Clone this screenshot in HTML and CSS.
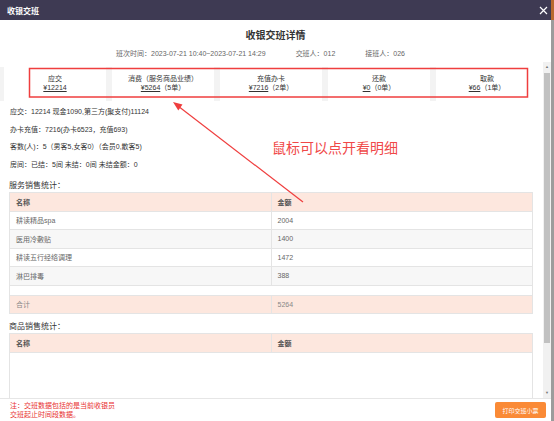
FILE: index.html
```html
<!DOCTYPE html>
<html lang="zh-CN">
<head>
    <meta charset="UTF-8">
    <title>收银交班</title>
    <link rel="stylesheet" href="styles.css">
</head>
<body>
    <div class="dialog">
        <div class="dlg-head">
            <span class="dlg-title">收银交班</span>
            <svg class="close" width="9" height="9" viewBox="0 0 9 9">
                <path d="M1 1 L8 8 M8 1 L1 8" stroke="#fff" stroke-width="1.2" fill="none"/>
            </svg>
        </div>

        <div class="dlg-body">
            <div class="top">
                <h1>收银交班详情</h1>
                <div class="meta">
                    <span>班次时间：2023-07-21 10:40~2023-07-21 14:29</span>
                    <span>交班人：012</span>
                    <span>接班人：026</span>
                </div>
            </div>

            <div class="scroll">
                <div class="content">
                    <div class="summary">
                        <div class="sum-cell">
                            <div>应交</div>
                            <div><u>¥12214</u></div>
                        </div>
                        <div class="sum-cell">
                            <div>消费（服务商品业绩）</div>
                            <div><u>¥5264</u>（5单）</div>
                        </div>
                        <div class="sum-cell">
                            <div>充值办卡</div>
                            <div><u>¥7216</u>（2单）</div>
                        </div>
                        <div class="sum-cell">
                            <div>还款</div>
                            <div><u>¥0</u>（0单）</div>
                        </div>
                        <div class="sum-cell">
                            <div>取款</div>
                            <div><u>¥66</u>（1单）</div>
                        </div>
                    </div>

                    <div class="info">
                        <p>应交：12214 现金1090,第三方(聚支付)11124</p>
                        <p>办卡充值：7216(办卡6523，充值693)</p>
                        <p>客数(人)：5（男客5,女客0）（会员0,散客5)</p>
                        <p>房间：已结：5间 未结：0间 未结金额：0</p>
                    </div>

                    <h3 class="sec-title">服务销售统计：</h3>
                    <table class="grid">
                        <thead>
                            <tr><th>名称</th><th>金额</th></tr>
                        </thead>
                        <tbody>
                            <tr><td>耕读精品spa</td><td>2004</td></tr>
                            <tr class="alt"><td>医用冷敷贴</td><td>1400</td></tr>
                            <tr><td>耕读五行经络调理</td><td>1472</td></tr>
                            <tr class="alt"><td>淋巴排毒</td><td>388</td></tr>
                            <tr class="blank"><td colspan="2"></td></tr>
                            <tr class="total"><td>合计</td><td>5264</td></tr>
                        </tbody>
                    </table>

                    <h3 class="sec-title">商品销售统计：</h3>
                    <table class="grid">
                        <thead>
                            <tr><th>名称</th><th>金额</th></tr>
                        </thead>
                        <tbody>
                            <tr class="empty"><td colspan="2"></td></tr>
                        </tbody>
                    </table>
                </div>

                <div class="scrollbar">
                    <div class="sb-arrow">▲</div>
                    <div class="sb-thumb"></div>
                    <div class="sb-space"></div>
                    <div class="sb-arrow">▼</div>
                </div>
            </div>
        </div>

        <div class="dlg-foot">
            <div class="note">注：交班数据包括的是当前收银员<br>交班起止时间段数据。</div>
            <button class="print-btn">打印交班小票</button>
        </div>

        <!-- 标注：红框 + 箭头 + 提示文字 -->
        <svg class="annot" width="551" height="421" viewBox="0 0 551 421">
            <rect x="29.5" y="68.5" width="498" height="28.5" fill="none" stroke="#ef3e3e" stroke-width="1.5"/>
            <line x1="303" y1="202" x2="178" y2="106" stroke="#ef3e3e" stroke-width="1.2"/>
            <polygon points="173,102 182.5,104.6 178.3,110.4" fill="#ef3e3e"/>
            <text x="272" y="153" class="annot-text">鼠标可以点开看明细</text>
        </svg>
    </div>
</body>
</html>
```

FILE: styles.css
```css
* {
    box-sizing: border-box;
}

body {
    margin: 0;
    width: 554px;
    height: 421px;
    overflow: hidden;
    background: linear-gradient(#b8692f 0, #b8692f 20px, #9c9c9c 20px);
    font-family: "Liberation Sans", "Noto Sans CJK SC", sans-serif;
}

.dialog {
    position: relative;
    width: 551px;
    height: 421px;
    background: #fff;
    display: flex;
    flex-direction: column;
}

.dlg-head {
    height: 20px;
    flex: none;
    background: #3e3a53;
    color: #fff;
    display: flex;
    align-items: center;
    justify-content: space-between;
    padding: 0 3px 0 7px;
}

.dlg-title {
    font-size: 8px;
    font-weight: bold;
}

.close {
    display: block;
}

.dlg-body {
    flex: 1;
    min-height: 0;
    display: flex;
    flex-direction: column;
}

.top {
    height: 42px;
    flex: none;
    padding-top: 8px;
}

.top h1 {
    margin: 0;
    text-align: center;
    font-size: 10px;
    line-height: 16px;
    color: #333;
}

.meta {
    margin-top: 5px;
    display: flex;
    justify-content: center;
    gap: 30px;
    padding-right: 30px;
    font-size: 7px;
    line-height: 10px;
    color: #666;
}

.scroll {
    flex: 1;
    min-height: 0;
    display: flex;
}

.content {
    flex: 1;
    overflow: hidden;
    padding-top: 5px;
}

/* 顶部汇总 */
.summary {
    margin-right: 5px;
    padding-left: 4px;
    display: grid;
    grid-template-columns: repeat(5, 1fr);
    gap: 6px;
    background: #f3f3f3;
}

.sum-cell {
    height: 34px;
    background: #fff;
    text-align: center;
    padding-top: 6.5px;
    font-size: 7px;
    line-height: 9px;
    color: #333;
}

.info {
    margin-top: 2px;
    padding-left: 10px;
}

.info p {
    margin: 0;
    font-size: 7px;
    line-height: 17.5px;
    color: #333;
}

.sec-title {
    margin: 7px 0 0;
    padding-left: 9px;
    font-size: 8px;
    line-height: 12px;
    font-weight: normal;
    color: #333;
}

.grid {
    width: 524px;
    margin-left: 9px;
    border-collapse: collapse;
    table-layout: fixed;
    font-size: 7px;
}

.grid th,
.grid td {
    width: 50%;
    height: 18.5px;
    padding: 0 6px;
    border: 1px solid #e4e4e4;
    text-align: left;
    color: #666;
}

.grid th {
    background: #fde7de;
    color: #555;
    font-weight: bold;
}

.grid tr.alt td {
    background: #f7f7f7;
}

.grid tr.blank td {
    height: 10px;
}

.grid tr.total td {
    background: #fde7de;
    color: #888;
}

.grid tr.empty td {
    height: 60px;
}

/* 假滚动条 */
.scrollbar {
    width: 8px;
    flex: none;
    background: #f1f1f1;
    display: flex;
    flex-direction: column;
}

.sb-arrow {
    height: 10px;
    font-size: 4px;
    line-height: 10px;
    text-align: center;
    color: #777;
}

.sb-thumb {
    height: 270px;
    margin: 1px 1px 0;
    background: #c1c1c1;
}

.sb-space {
    flex: 1;
}

.dlg-foot {
    height: 23px;
    flex: none;
    border-top: 1px solid #e6e6e6;
    display: flex;
    align-items: center;
    justify-content: space-between;
    padding: 0 5px 0 10px;
}

.note {
    font-size: 7px;
    line-height: 9px;
    color: #e8312f;
}

.print-btn {
    width: 51px;
    height: 16px;
    padding: 0;
    border: none;
    border-radius: 2px;
    background: #fa8a36;
    color: #fff;
    font-family: "Liberation Sans", "Noto Sans CJK SC", sans-serif;
    font-size: 6px;
}

.annot {
    position: absolute;
    left: 0;
    top: 0;
    pointer-events: none;
}

.annot-text {
    font-family: "Noto Sans CJK SC", sans-serif;
    font-size: 14px;
    fill: #f04848;
}
```
